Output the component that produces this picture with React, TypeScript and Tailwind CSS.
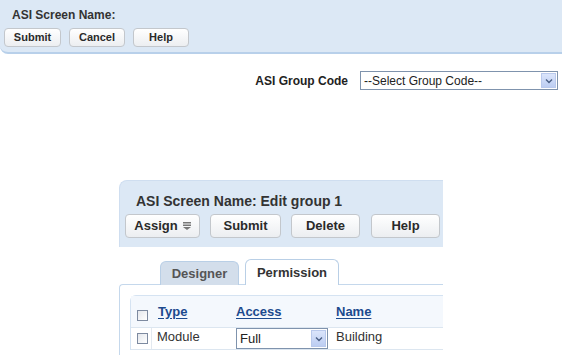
import React from "react";

const font = { fontFamily: '"Liberation Sans", Arial, sans-serif' };

const Btn = ({ label, w, h, size }: { label: string; w: string; h: string; size: string }) => (
  <div
    className={`${w} ${h} ${size} flex items-center justify-center rounded-[4px] border border-[#c3c7cc] bg-gradient-to-b from-white to-[#eceef1] font-bold text-[#2a2a2a]`}
  >
    {label}
  </div>
);

const Chevron = () => (
  <svg width="8" height="6" viewBox="0 0 8 6">
    <path d="M1 1.5 L4 4.5 L7 1.5" fill="none" stroke="#4a5f85" strokeWidth="1.4" />
  </svg>
);

const FakeSelect = ({ text, w, h, size }: { text: string; w: string; h: string; size: string }) => (
  <div className={`${w} ${h} flex border border-[#7f93ad] bg-white`}>
    <div className={`flex-1 ${size} pl-[3px] flex items-center text-[#222]`}>{text}</div>
    <div className="w-[15px] m-[1px] flex items-center justify-center bg-gradient-to-b from-[#dbe5fb] to-[#bccdf2] border border-[#b9c9ec]">
      <Chevron />
    </div>
  </div>
);

const Check = () => (
  <div className="w-[11px] h-[11px] border border-[#7d8aa0] bg-gradient-to-br from-[#e4e7ec] to-white" />
);

export default function App() {
  return (
    <div className="w-[562px] h-[355px] overflow-hidden bg-white" style={font}>
      {/* top bar */}
      <div className="h-[54px] bg-[#dce8f5] border-b-2 border-[#b8d0ea] rounded-bl-[8px]">
        <div className="pl-[12px] pt-[8px] text-[12px] leading-[14px] font-bold text-[#333]">
          ASI Screen Name:
        </div>
        <div className="flex pl-[4px] mt-[6px] gap-[8px]">
          <Btn label="Submit" w="w-[57px]" h="h-[19px]" size="text-[11px]" />
          <Btn label="Cancel" w="w-[56px]" h="h-[19px]" size="text-[11px]" />
          <Btn label="Help" w="w-[56px]" h="h-[19px]" size="text-[11px]" />
        </div>
      </div>

      {/* group code */}
      <div className="mt-[17px] flex items-center justify-end pr-[4px]">
        <span className="text-[12px] font-bold text-[#222] mr-[12px]">ASI Group Code</span>
        <FakeSelect text="--Select Group Code--" w="w-[198px]" h="h-[19px]" size="text-[12px]" />
      </div>

      {/* edit group */}
      <div className="mt-[90px] ml-[119px] w-[324px] overflow-hidden">
        <div className="w-[400px] h-[67px] bg-[#dce8f5] rounded-tl-[8px] border-l border-t border-[#cfdef0]">
          <div className="pl-[16px] pt-[12px] text-[14px] leading-[16px] font-bold text-[#333]">
            ASI Screen Name: Edit group 1
          </div>
          <div className="flex pl-[5px] mt-[5px]">
            <div className="w-[75px] h-[24px] flex items-center justify-center gap-[5px] rounded-[4px] border border-[#c3c7cc] bg-gradient-to-b from-white to-[#eceef1] text-[13px] font-bold text-[#2a2a2a]">
              Assign
              <svg width="8" height="8" viewBox="0 0 8 8">
                <rect x="0" y="0" width="8" height="1.5" fill="#777" />
                <rect x="0" y="2.5" width="8" height="1.5" fill="#777" />
                <path d="M0 5 H8 L4 8 Z" fill="#777" />
              </svg>
            </div>
            <div className="ml-[10px]">
              <Btn label="Submit" w="w-[71px]" h="h-[24px]" size="text-[13px]" />
            </div>
            <div className="ml-[10px]">
              <Btn label="Delete" w="w-[69px]" h="h-[24px]" size="text-[13px]" />
            </div>
            <div className="ml-[11px]">
              <Btn label="Help" w="w-[69px]" h="h-[24px]" size="text-[13px]" />
            </div>
          </div>
        </div>

        {/* tabs */}
        <div className="mt-[12px] flex items-end pl-[41px] gap-[6px] relative z-10 -mb-px">
          <div className="w-[79px] h-[24px] rounded-t-[6px] border border-b-0 border-[#b9cfe6] bg-[#d3deeb] flex items-center justify-center text-[13px] font-bold text-[#555]">
            Designer
          </div>
          <div className="w-[94px] h-[26px] rounded-t-[6px] border border-b-0 border-[#b9cfe6] bg-white flex items-center justify-center text-[13px] font-bold text-[#333]">
            Permission
          </div>
        </div>

        {/* content */}
        <div className="w-[400px] h-[80px] border-l border-t border-[#c5d8ec] rounded-tl-[4px] bg-white pt-[10px] pl-[10px]">
          <div className="border-l border-t border-[#d5e3f2] rounded-tl-[6px]">
            <div className="h-[32px] flex items-end pb-[6px] bg-[#f4f8fd] border-b border-[#dce6f0] text-[13px]">
              <div className="w-[21px] flex justify-center pl-[2px]">
                <Check />
              </div>
              <div className="w-[84px] pl-[6px] font-bold text-[#1c4a8e] underline underline-offset-2">Type</div>
              <div className="w-[100px] font-bold text-[#1c4a8e] underline underline-offset-2">Access</div>
              <div className="font-bold text-[#1c4a8e] underline underline-offset-2">Name</div>
            </div>
            <div className="h-[22px] flex items-start border-b border-[#dce6f0] text-[13px] text-[#333]">
              <div className="w-[21px] h-full flex items-center justify-center pl-[2px] border-r border-[#e3e9f0]">
                <Check />
              </div>
              <div className="w-[84px] pl-[5px] leading-[15px] pt-[1px]">Module</div>
              <div className="w-[100px]">
                <FakeSelect text="Full" w="w-[92px]" h="h-[21px]" size="text-[13px]" />
              </div>
              <div className="leading-[15px] pt-[1px]">Building</div>
            </div>
          </div>
        </div>
      </div>
    </div>
  );
}
